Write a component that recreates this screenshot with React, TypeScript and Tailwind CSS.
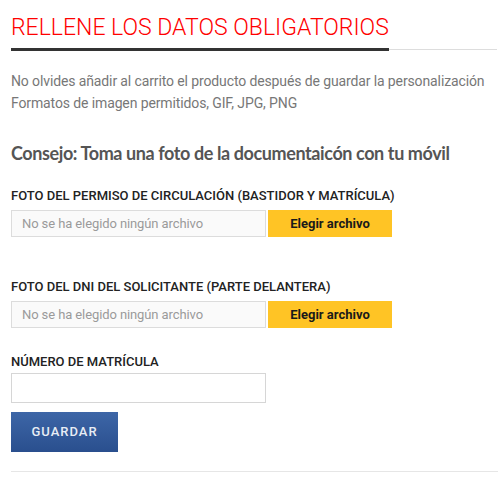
import React from 'react';

const FileField: React.FC<{ label: string; className?: string }> = ({ label, className }) => (
  <div className={className}>
    <label className="block text-[13px] leading-4 font-medium text-[#222]">{label}</label>
    <div className="mt-[6px] flex h-[27px]">
      <div className="w-[255px] h-full bg-[#fafafa] border border-[#dcdcdc] pl-[10px] flex items-center text-[13px] tracking-[-0.1px] text-[#9a9a9a]">
        No se ha elegido ningún archivo
      </div>
      <button className="ml-[2px] w-[124px] h-full bg-[#ffc425] text-[13px] font-bold text-[#1a1a1a]">
        Elegir archivo
      </button>
    </div>
  </div>
);

export default function App() {
  return (
    <div className="w-[498px] min-h-[480px] bg-white pt-[14px] pl-[11px] font-['Roboto','Liberation_Sans',sans-serif]">
      {/* Title */}
      <div className="flex border-b border-[#dddddd] mr-[1px]">
        <h2 className="-mb-[2px] pb-[6px] border-b-[3px] border-[#333] text-[23px] leading-7 font-light text-[#ff0000] whitespace-nowrap">
          RELLENE LOS DATOS OBLIGATORIOS
        </h2>
      </div>

      {/* Info */}
      <p className="mt-[20px] text-[14px] leading-[22px] tracking-[-0.12px] text-[#777]">
        No olvides añadir al carrito el producto después de guardar la personalización
        <br />
        Formatos de imagen permitidos, GIF, JPG, PNG
      </p>

      <h3 className="mt-[27px] text-[18px] leading-6 font-bold tracking-[-0.4px] text-[#555] font-['Lato','Open_Sans',sans-serif] whitespace-nowrap">
        Consejo: Toma una foto de la documentaicón con tu móvil
      </h3>

      <FileField className="mt-[23px]" label="FOTO DEL PERMISO DE CIRCULACIÓN (BASTIDOR Y MATRÍCULA)" />
      <FileField className="mt-[42px]" label="FOTO DEL DNI DEL SOLICITANTE (PARTE DELANTERA)" />

      <div className="mt-[26px]">
        <label className="block text-[13px] leading-4 font-medium text-[#222]">NÚMERO DE MATRÍCULA</label>
        <input className="mt-[3px] block w-[255px] h-[30px] border border-[#d6d6d6] bg-white outline-none" />
      </div>

      <button className="mt-[9px] w-[107px] h-[40px] bg-gradient-to-b from-[#3d66a7] to-[#2a4f8e] text-[13px] font-medium tracking-[1px] text-[#e8edf5]">
        GUARDAR
      </button>

      <div className="mt-[19px] border-t border-[#e6e6e6]" />
    </div>
  );
}
